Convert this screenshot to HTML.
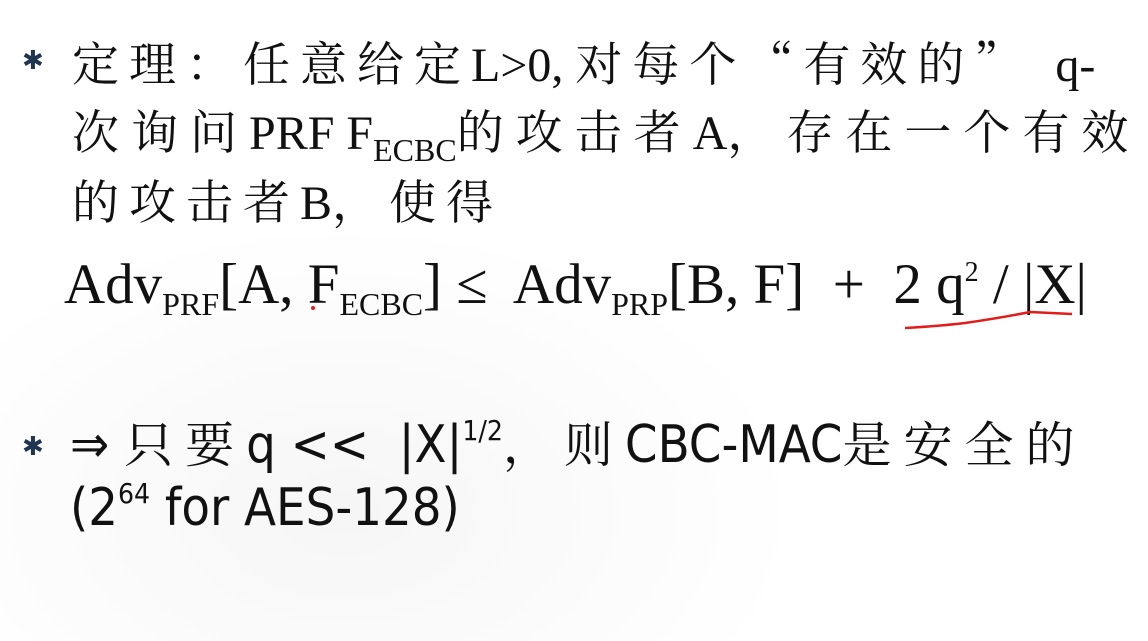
<!DOCTYPE html>
<html><head><meta charset="utf-8"><style>
html,body{margin:0;padding:0}
body{width:1148px;height:641px;overflow:hidden;position:relative;background:#fff;
background:radial-gradient(ellipse at 30% 80%,#f6f6f6 0,#fff 40%),#fff;}
.t{position:absolute;white-space:nowrap;color:#111;font-family:"Liberation Serif","Noto Serif CJK SC",serif;font-size:48px;line-height:1}
.c{letter-spacing:10px;font-family:"Noto Serif CJK SC",serif;font-size:47px}
sub{font-size:32px;vertical-align:-12px;line-height:0}
sup{font-size:28px;vertical-align:22px;line-height:0}
.b{position:absolute;color:#1f3550;font-size:26px;font-family:"DejaVu Sans",sans-serif;font-weight:bold}
.n{font-family:"DejaVu Sans Condensed","Liberation Sans",sans-serif;font-size:52px;letter-spacing:0px}
.n .c{letter-spacing:12px;font-size:49px}
.n sup{font-size:28px;letter-spacing:0px}
</style></head><body>
<div class="b" style="left:22px;top:46px">✱</div>
<div class="t" style="left:72px;top:38px"><span class="c">定理：任意给定</span>L&gt;0, <span class="c">对每个“有效的”</span>&nbsp; q-</div>
<div class="t" style="left:72px;top:106px"><span class="c" style="letter-spacing:12px">次询问</span>PRF F<sub>ECBC</sub><span class="c" style="letter-spacing:12px">的攻击者</span>A<span class="c" style="letter-spacing:12px">，存在一个有效</span></div>
<div class="t" style="left:72px;top:176px"><span class="c">的攻击者</span>B<span class="c">，使得</span></div>
<div class="t" style="left:64px;top:256px;font-size:57px">Adv<sub>PRF</sub>[A, F<sub>ECBC</sub>] ≤&nbsp; Adv<sub>PRP</sub>[B, F]&nbsp; +&nbsp; 2 q<sup>2</sup> / |X|</div>
<div style="position:absolute;left:311px;top:306px;width:4px;height:4px;border-radius:2px;background:#e02020"></div>
<svg style="position:absolute;left:0;top:0" width="1148" height="641"><path d="M905 328 Q940 326 965 323 Q1000 318 1030 312 L1072 314" stroke="#e21b1b" stroke-width="2.5" fill="none"/></svg>
<div class="b" style="left:22px;top:432px">✱</div>
<div class="t n" style="left:70px;top:418px">⇒ <span class="c">只要</span>q &lt;&lt;&nbsp; |X|<sup>1/2</sup><span class="c">，则</span>CBC-MAC<span class="c">是安全的</span></div>
<div class="t n" style="left:70px;top:482px">(2<sup>64</sup> for AES-128)</div>
</body></html>
